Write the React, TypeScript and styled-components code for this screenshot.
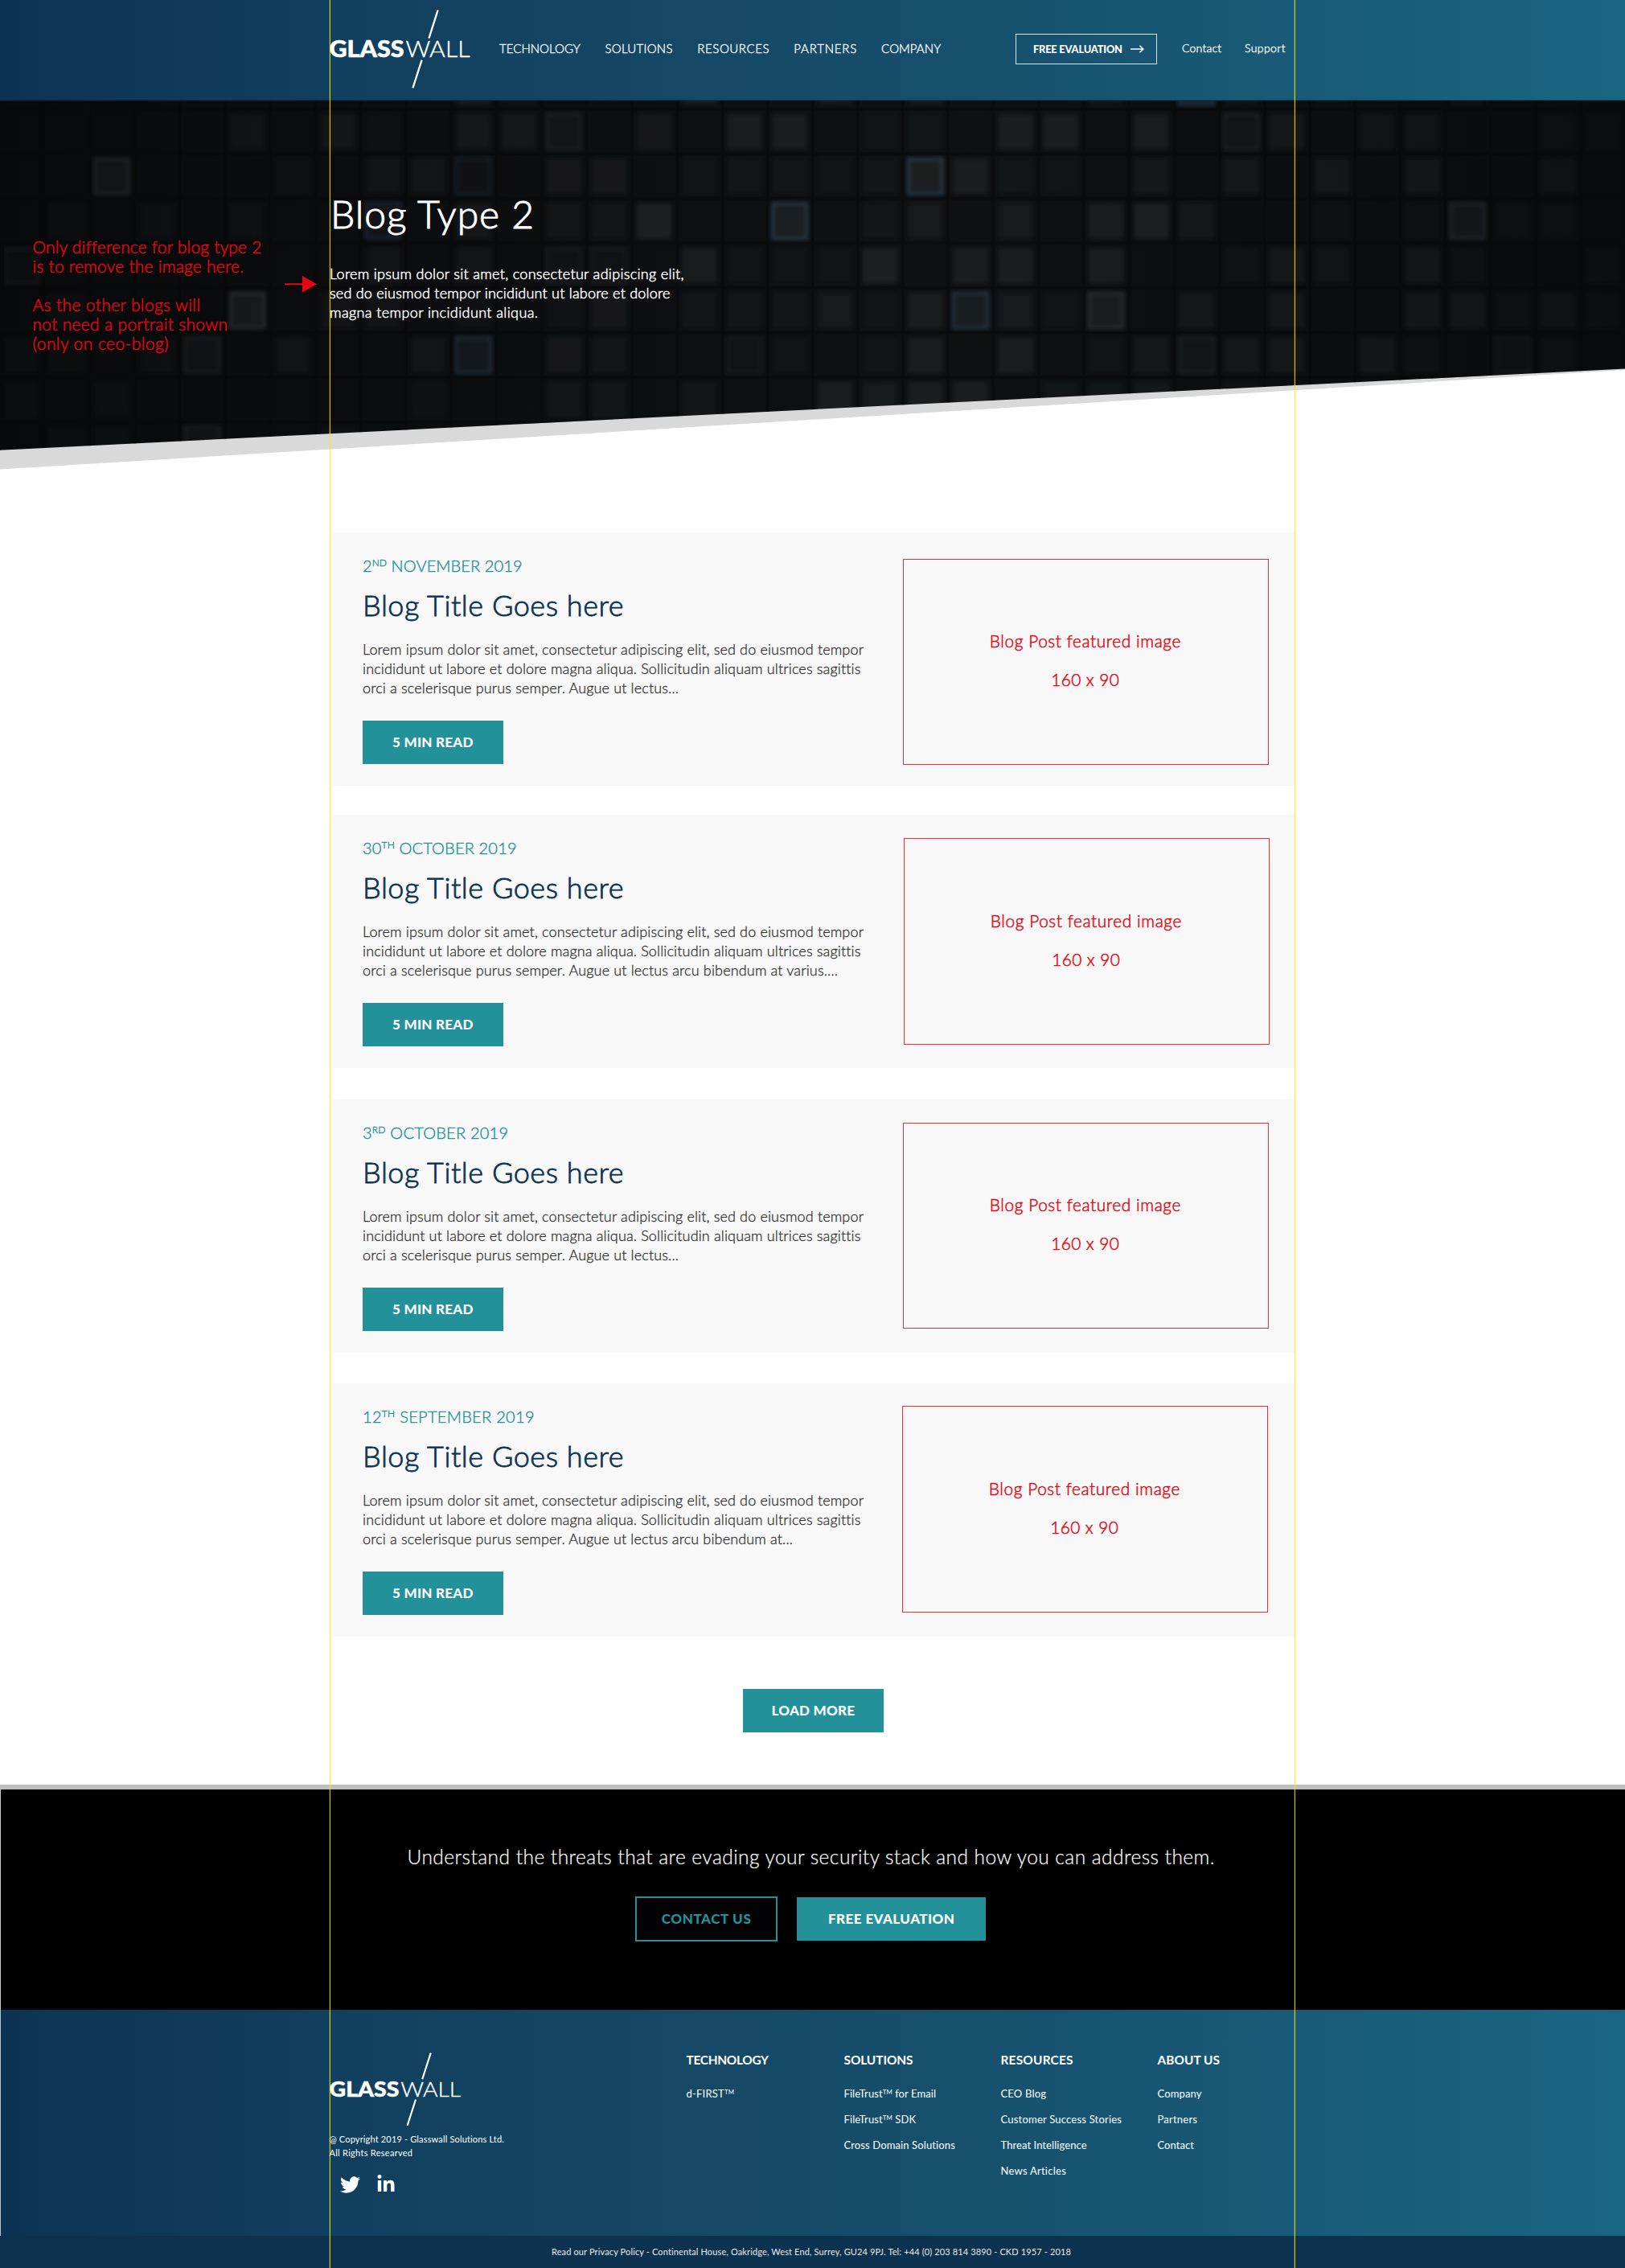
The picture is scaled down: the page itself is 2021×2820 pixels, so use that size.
import React, { useLayoutEffect, useRef, useState } from 'react';
import styled, { createGlobalStyle, css } from 'styled-components';
import { FaLinkedinIn, FaTwitter } from 'react-icons/fa';

const color = {
  teal: '#23919a',
  navy: '#0b3354',
  red: '#e30613',
  panel: '#f8f8f8',
  ink: '#2e2e2d',
};

const brandGradient =
  'linear-gradient(90deg, #0c3353 0%, #113f5f 21%, #154864 42%, #16506d 60%, #185a77 79%, #196682 100%)';

const GlobalStyle = createGlobalStyle`
  *, *::before, *::after { box-sizing: border-box; }
  body {
    margin: 0;
    background: #fff;
    font-family: Lato, 'Open Sans', sans-serif;
    -webkit-font-smoothing: antialiased;
  }
  h1, h2, h3, p, ul { margin: 0; padding: 0; font-weight: inherit; list-style: none; }
  a { color: inherit; text-decoration: none; }
  sup { font-size: 60%; line-height: 0; vertical-align: 0.56em; }
`;

/* A weight between Lato Light and Lato Regular, set by the stroke in px. */
const bookWeight = (stroke: number) => css`
  font-weight: 300;
  -webkit-text-stroke: ${stroke}px currentColor;
`;

/* ---------- text tracked out to a set measure ---------- */

const TrackedText = styled.span`
  display: inline-block;
  white-space: nowrap;
`;

function Tracked({ width, children }: { width: number; children: React.ReactNode }) {
  const ref = useRef<HTMLSpanElement>(null);
  const [spacing, setSpacing] = useState(0);
  useLayoutEffect(() => {
    const el = ref.current;
    if (!el) return;
    el.style.letterSpacing = '0px';
    const natural = el.getBoundingClientRect().width;
    const gaps = Math.max(1, (el.textContent || '').length - 1);
    const next = (width - natural) / gaps;
    el.style.letterSpacing = `${next}px`;
    setSpacing(next);
  }, [width]);
  return (
    <TrackedText ref={ref} style={{ letterSpacing: spacing, marginRight: -spacing }}>
      {children}
    </TrackedText>
  );
}

type Line = [text: string, width: number];

function Lines({ lines }: { lines: Line[] }) {
  return (
    <>
      {lines.map(([text, width], i) => (
        <React.Fragment key={i}>
          {i > 0 && <br />}
          {text && <Tracked width={width}>{text}</Tracked>}
        </React.Fragment>
      ))}
    </>
  );
}

/* ---------- page frame ---------- */

const Page = styled.div`
  position: relative;
  width: 2021px;
  height: 2820px;
  overflow: hidden;
`;

const Guide = styled.div<{ $x: number }>`
  position: absolute;
  top: 0;
  bottom: 0;
  left: ${(p) => p.$x}px;
  width: 1px;
  background: rgba(255, 237, 0, 0.78);
  box-shadow: -1px 0 0 rgba(255, 237, 0, 0.2);
  z-index: 5;
`;

/* ---------- logo ---------- */

const LogoSvg = styled.svg<{ $width: number }>`
  display: block;
  flex: none;
  width: ${(p) => p.$width}px;
  height: auto;
`;

function Logo({ width }: { width: number }) {
  return (
    <LogoSvg $width={width} viewBox="0 0 176 98" fill="#fff">
      <text
        x="-0.5"
        y="59"
        fontSize="28"
        fontWeight="900"
        stroke="#fff"
        strokeWidth="0.5"
        textLength="93"
        lengthAdjust="spacingAndGlyphs"
      >
        GLASS
      </text>
      <text
        x="94.5"
        y="59"
        fontSize="28"
        fontWeight="300"
        stroke="#fff"
        strokeWidth="0.4"
        textLength="80"
        lengthAdjust="spacingAndGlyphs"
      >
        WALL
      </text>
      <path d="M134.6 0.6L123.4 35.6M114.6 62.6L103.4 97.4" stroke="#fff" strokeWidth="2.3" />
    </LogoSvg>
  );
}

/* ---------- header ---------- */

const Header = styled.header`
  display: flex;
  height: 125px;
  padding-left: 410px;
  color: #fff;
  background: ${brandGradient};
  border-bottom: 1px solid rgba(8, 40, 62, 0.5);
`;

const HeaderLogo = styled.a`
  width: 211px;
  padding-top: 12px;
`;

const Nav = styled.nav`
  display: flex;
  gap: 30.8px;
  width: 641.5px;
  padding-top: 50px;
  font-size: 15px;
  line-height: 20px;
  ${bookWeight(0.35)}
`;

const HeaderButton = styled.a`
  display: flex;
  align-items: center;
  gap: 10px;
  width: 176px;
  height: 38px;
  margin-top: 42px;
  padding-left: 21.5px;
  border: 1.5px solid rgba(255, 255, 255, 0.85);
  font-size: 12.8px;
  font-weight: 900;
`;

const UtilityNav = styled.nav`
  display: flex;
  gap: 29px;
  padding: 50px 0 0 31.5px;
  font-size: 14px;
  line-height: 20px;
  ${bookWeight(0.35)}
`;

const NAV: Line[] = [
  ['TECHNOLOGY', 100.7],
  ['SOLUTIONS', 84],
  ['RESOURCES', 89.2],
  ['PARTNERS', 78],
  ['COMPANY', 74],
];

function SiteHeader() {
  return (
    <Header>
      <HeaderLogo href="#">
        <Logo width={176} />
      </HeaderLogo>
      <Nav>
        {NAV.map(([label, width]) => (
          <a href="#" key={label}>
            <Tracked width={width}>{label}</Tracked>
          </a>
        ))}
      </Nav>
      <HeaderButton href="#">
        <Tracked width={111}>FREE EVALUATION</Tracked>
        <svg width="17" height="10" viewBox="0 0 17 10" fill="none" stroke="#fff" strokeWidth="1.5">
          <path d="M0 5H15.5M11.5 0.7L15.8 5L11.5 9.3" />
        </svg>
      </HeaderButton>
      <UtilityNav>
        <a href="#"><Tracked width={49}>Contact</Tracked></a>
        <a href="#"><Tracked width={50.5}>Support</Tracked></a>
      </UtilityNav>
    </Header>
  );
}

/* ---------- hero ---------- */

const HeroSection = styled.section`
  position: relative;
  display: grid;
  grid-template-columns: 410px 1fr;
  height: 459px;
  margin-bottom: -1px;
`;

const HeroArt = styled.svg`
  position: absolute;
  inset: 0;
  width: 100%;
  height: 100%;
`;

const Annotation = styled.aside`
  position: relative;
  display: flex;
  align-items: flex-start;
  gap: 30px;
  padding: 169.5px 0 0 40.5px;
  color: ${color.red};
  font-size: 20.8px;
  line-height: 24.15px;
  ${bookWeight(0.5)}

  p { width: 283.5px; }
  svg { flex: none; margin-top: 48px; }
`;

const HeroCopy = styled.div`
  position: relative;
  color: #fff;

  h1 { padding: 111px 0 31.5px 1px; font-size: 48px; line-height: 60px; ${bookWeight(1)} }
  p { font-size: 18px; line-height: 24.2px; ${bookWeight(0.5)} }
`;

const TILE_X = 5.3;
const TILE_Y = -39;
const TILE_PITCH_X = 56.2;
const TILE_PITCH_Y = 55.6;

/* Lit tiles, one line per row: column, brightness, and an edge (g grey, b blue). */
const TILES = [
  '10:4 11:1 15:4 18:3 20:3 24:2 26:5b 27:2 29:1 32:2',
  '5:2 7:3 8:1 10:3 11:3 12:2g 14:3 16:4 17:4 19:1 20:2 22:4 23:4 25:4 27:2g 28:3 30:2 31:2 34:1 35:1',
  '2:3g 6:1 8:2 9:2 10:2b 12:3 13:3 15:1 16:2 17:2 18:1 19:2 20:6b 21:4 22:2 23:1 25:3 27:3 29:3 31:3 34:2',
  '1:1 3:1 5:1 8:3b 10:3 12:2 13:2 14:5 17:6b 19:2 20:3 22:3 24:4 25:5 26:3 29:1 31:1 32:3g 33:1 34:1',
  '0:1g 8:2 10:2 12:1g 13:1g 15:4 16:1 17:1 18:1 19:5 21:4 22:4 24:4 27:1 28:3 29:2 31:3 32:1 35:1',
  '1:1 5:4g 7:2 8:2 10:1 12:1 13:3 15:2 16:2 17:2 18:3 19:1 20:4 21:5b 22:3 23:1 24:4g 26:3 28:3 31:3 32:3 33:1 34:2 35:1',
  '0:1 1:1 3:1 4:2g 6:2 9:2 10:4b 12:3 13:2 16:1g 17:1 19:1 20:4 22:4 24:1 25:3 26:2g 27:3 28:3 30:3 31:1 33:1g 34:1',
  '0:1 2:1 9:1 12:2 13:2 15:2 18:4 19:3 20:4 21:4 23:2 24:2 25:3 27:1',
  '1:1 2:1 4:2g 7:1',
].map((row) =>
  row.split(' ').map((cell) => {
    const [col, spec] = cell.split(':');
    return { col: Number(col), level: parseInt(spec, 10), edge: spec.slice(1) };
  }),
);

function Tiles() {
  return (
    <g>
      {TILES.map((row, r) =>
        row.map(({ col, level, edge }) => {
          const blue = edge === 'b';
          return (
            <rect
              key={`${r}-${col}`}
              x={TILE_X + col * TILE_PITCH_X}
              y={TILE_Y + r * TILE_PITCH_Y}
              width={43}
              height={44}
              fill={blue ? '#9fc0d6' : '#e8eef4'}
              fillOpacity={level * 0.0145}
              stroke={edge ? (blue ? '#345f80' : '#48525a') : 'none'}
              strokeOpacity={0.08 + level * 0.085}
              strokeWidth={2.5}
            />
          );
        }),
      )}
    </g>
  );
}

function Hero() {
  return (
    <HeroSection>
      <HeroArt viewBox="0 0 2021 459" preserveAspectRatio="none">
        <defs>
          <linearGradient id="night">
            <stop offset="0" stopColor="#08090a" />
            <stop offset="0.35" stopColor="#0d0e10" />
            <stop offset="0.6" stopColor="#0e1011" />
            <stop offset="1" stopColor="#090a0b" />
          </linearGradient>
          <pattern
            id="seams"
            x={TILE_X - 8}
            y={TILE_Y - 8}
            width={TILE_PITCH_X}
            height={TILE_PITCH_Y}
            patternUnits="userSpaceOnUse"
          >
            <path d="M0 2H56.2M2 0V55.6" stroke="#050607" strokeWidth="4" strokeOpacity="0.35" />
          </pattern>
          <clipPath id="slope">
            <polygon points="0,0 2021,0 2021,333.5 0,434.7" />
          </clipPath>
          <filter id="soft" x="0" y="0" width="1" height="1">
            <feGaussianBlur stdDeviation="2.4" />
          </filter>
        </defs>
        <polygon points="0,400 2021,300 2021,335 0,458.6" fill="#d9d9d9" />
        <g clipPath="url(#slope)">
          <rect width="2021" height="459" fill="url(#night)" />
          <rect width="2021" height="459" fill="url(#seams)" />
          <g filter="url(#soft)">
            <Tiles />
          </g>
        </g>
      </HeroArt>
      <Annotation>
        <p>
          <Lines
            lines={[
              ['Only difference for blog type 2', 284],
              ['is to remove the image here.', 262.5],
              ['', 0],
              ['As the other blogs will', 208.5],
              ['not need a portrait shown', 242.5],
              ['(only on ceo-blog)', 169],
            ]}
          />
        </p>
        <svg width="40" height="21" viewBox="0 0 40 21" fill={color.red}>
          <path d="M0 9.3H22V0L40 10.3L22 20.6V11.3H0Z" />
        </svg>
      </Annotation>
      <HeroCopy>
        <h1><Tracked width={253}>Blog Type 2</Tracked></h1>
        <p>
          <Lines
            lines={[
              ['Lorem ipsum dolor sit amet, consectetur adipiscing elit,', 440.5],
              ['sed do eiusmod tempor incididunt ut labore et dolore', 423.5],
              ['magna tempor incididunt aliqua.', 259],
            ]}
          />
        </p>
      </HeroCopy>
    </HeroSection>
  );
}

/* ---------- blog list ---------- */

const Button = styled.a<{ $w: number; $outline?: boolean }>`
  display: flex;
  align-items: center;
  justify-content: center;
  width: ${(p) => p.$w}px;
  height: ${(p) => (p.$outline ? 56 : 54)}px;
  padding-bottom: 1px;
  border: ${(p) => (p.$outline ? `2px solid ${color.teal}` : 'none')};
  background: ${(p) => (p.$outline ? '#030306' : color.teal)};
  color: ${(p) => (p.$outline ? color.teal : '#fff')};
  font-size: 17px;
  font-weight: 900;
`;

const Main = styled.main`
  display: flex;
  flex-direction: column;
  align-items: flex-start;
  height: 1636px;
  padding: 79px 0 0 410px;
`;

const Card = styled.article<{ $gap: number }>`
  display: flex;
  align-items: flex-start;
  width: 1200px;
  height: 315px;
  margin-bottom: ${(p) => p.$gap}px;
  padding-left: 41px;
  background: ${color.panel};
`;

const CardBody = styled.div`
  width: 660px;
  padding-top: 29px;
`;

const CardDate = styled.p`
  height: 24px;
  color: ${color.teal};
  font-size: 20px;
  line-height: 24px;
  ${bookWeight(0.4)}
`;

const CardTitle = styled.h2`
  height: 44px;
  margin-top: 15px;
  color: ${color.navy};
  font-size: 36px;
  line-height: 44px;
  ${bookWeight(0.8)}
`;

const CardText = styled.p`
  margin: 21px 0 29px;
  color: ${color.ink};
  font-size: 18px;
  line-height: 24px;
  ${bookWeight(0.3)}
`;

const FeaturedImage = styled.div<{ $top: number; $left: number }>`
  width: 455px;
  height: 256.5px;
  margin: ${(p) => p.$top}px 0 0 ${(p) => p.$left}px;
  padding: 89.5px 2px 0 0;
  border: 1.4px solid #e8303b;
  color: ${color.red};
  font-size: 20.8px;
  line-height: 24px;
  text-align: center;
  ${bookWeight(0.5)}
`;

type Post = {
  day: string;
  suffix: string;
  month: string;
  dateWidth: number;
  lastLine: Line;
  gap: number;
  image: [top: number, left: number];
};

const POSTS: Post[] = [
  { day: '2', suffix: 'ND', month: ' NOVEMBER 2019', dateWidth: 198.5, lastLine: ['orci a scelerisque purus semper. Augue ut lectus...', 393], gap: 36, image: [32.6, 12] },
  { day: '30', suffix: 'TH', month: ' OCTOBER 2019', dateWidth: 191.5, lastLine: ['orci a scelerisque purus semper. Augue ut lectus arcu bibendum at varius....', 591], gap: 39, image: [29, 13] },
  { day: '3', suffix: 'RD', month: ' OCTOBER 2019', dateWidth: 181, lastLine: ['orci a scelerisque purus semper. Augue ut lectus...', 393], gap: 38, image: [28.6, 12] },
  { day: '12', suffix: 'TH', month: ' SEPTEMBER 2019', dateWidth: 213.5, lastLine: ['orci a scelerisque purus semper. Augue ut lectus arcu bibendum at...', 535], gap: 65, image: [28, 11] },
];

function BlogCard({ post }: { post: Post }) {
  return (
    <Card $gap={post.gap}>
      <CardBody>
        <CardDate>
          <Tracked width={post.dateWidth}>
            {post.day}
            <sup>{post.suffix}</sup>
            {post.month}
          </Tracked>
        </CardDate>
        <CardTitle><Tracked width={324.5}>Blog Title Goes here</Tracked></CardTitle>
        <CardText>
          <Lines
            lines={[
              ['Lorem ipsum dolor sit amet, consectetur adipiscing elit, sed do eiusmod tempor', 623],
              ['incididunt ut labore et dolore magna aliqua. Sollicitudin aliquam ultrices sagittis', 619],
              post.lastLine,
            ]}
          />
        </CardText>
        <Button href="#" $w={174.5}><Tracked width={100.5}>5 MIN READ</Tracked></Button>
      </CardBody>
      <FeaturedImage $top={post.image[0]} $left={post.image[1]}>
        <Lines lines={[['Blog Post featured image', 237.5], ['', 0], ['160 x 90', 84.5]]} />
      </FeaturedImage>
    </Card>
  );
}

const LoadMoreRow = styled.div`
  display: flex;
  padding-left: 514px;
`;

/* ---------- call to action ---------- */

const CtaSection = styled.section`
  display: flex;
  flex-direction: column;
  align-items: center;
  height: 280px;
  padding: 69px 4px 0 0;
  border-top: 6px solid #bfbfbf;
  background: linear-gradient(90deg, #c8c8c8 1px, #000 1px);
  color: #fff;
  font-size: 24.5px;
  line-height: 30px;
  ${bookWeight(0.2)}
`;

const CtaButtons = styled.div`
  display: flex;
  align-items: center;
  gap: 24.5px;
  margin: 34px 1px 0 0;
  -webkit-text-stroke: 0;
`;

/* ---------- footer ---------- */

const FooterSection = styled.footer`
  display: grid;
  grid-template-columns: 444px 196px 195px 195px 1fr;
  height: 281px;
  padding: 52px 0 0 409.5px;
  background: linear-gradient(90deg, #b9c4cc 1px, transparent 1px), ${brandGradient};
  color: #fff;
`;

const FooterLogo = styled.div`
  padding-top: 1px;
`;

const Copyright = styled.p`
  margin-top: 7px;
  font-size: 11px;
  line-height: 17.8px;
`;

const Social = styled.div`
  display: flex;
  gap: 20px;
  margin: 17.5px 0 0 13px;
`;

const FooterColumn = styled.div`
  h3 { font-size: 15.4px; font-weight: 700; line-height: 20px; }
  ul { margin-top: 15.5px; font-size: 13px; line-height: 32px; }
  li { height: 32px; }
`;

const LegalBar = styled.div`
  height: 40px;
  padding: 10.5px 0 0 686px;
  background: #0c324f;
  color: #e6ebef;
  font-size: 11px;
  line-height: 18px;
`;

const TM = <sup>TM</sup>;

const COLUMNS: { title: Line; links: { label: React.ReactNode; width: number }[] }[] = [
  { title: ['TECHNOLOGY', 102.5], links: [{ label: <>d-FIRST{TM}</>, width: 59.5 }] },
  {
    title: ['SOLUTIONS', 86],
    links: [
      { label: <>FileTrust{TM} for Email</>, width: 114.5 },
      { label: <>FileTrust{TM} SDK</>, width: 89.5 },
      { label: 'Cross Domain Solutions', width: 138.5 },
    ],
  },
  {
    title: ['RESOURCES', 90],
    links: [
      { label: 'CEO Blog', width: 56.5 },
      { label: 'Customer Success Stories', width: 150.5 },
      { label: 'Threat Intelligence', width: 107 },
      { label: 'News Articles', width: 81.5 },
    ],
  },
  {
    title: ['ABOUT US', 77.5],
    links: [
      { label: 'Company', width: 55 },
      { label: 'Partners', width: 49.5 },
      { label: 'Contact', width: 45.5 },
    ],
  },
];

function SiteFooter() {
  return (
    <>
      <FooterSection>
        <div>
          <FooterLogo>
            <Logo width={164.4} />
          </FooterLogo>
          <Copyright>
            <Lines lines={[['@ Copyright 2019 - Glasswall Solutions Ltd.', 217.5], ['All Rights Researved', 103.5]]} />
          </Copyright>
          <Social>
            <FaTwitter size={25} />
            <FaLinkedinIn size={24} />
          </Social>
        </div>
        {COLUMNS.map((col) => (
          <FooterColumn key={col.title[0]}>
            <h3><Tracked width={col.title[1]}>{col.title[0]}</Tracked></h3>
            <ul>
              {col.links.map((link, i) => (
                <li key={i}>
                  <a href="#"><Tracked width={link.width}>{link.label}</Tracked></a>
                </li>
              ))}
            </ul>
          </FooterColumn>
        ))}
      </FooterSection>
      <LegalBar>
        <Tracked width={646}>
          Read our Privacy Policy - Continental House, Oakridge, West End, Surrey, GU24 9PJ. Tel: +44 (0) 203 814 3890 - CKD 1957 - 2018
        </Tracked>
      </LegalBar>
    </>
  );
}

export default function App() {
  return (
    <Page>
      <GlobalStyle />
      <SiteHeader />
      <Hero />
      <Main>
        {POSTS.map((post) => (
          <BlogCard key={post.day} post={post} />
        ))}
        <LoadMoreRow>
          <Button href="#" $w={174.5}><Tracked width={103.5}>LOAD MORE</Tracked></Button>
        </LoadMoreRow>
      </Main>
      <CtaSection>
        <p>
          <Tracked width={1004}>
            Understand the threats that are evading your security stack and how you can address them.
          </Tracked>
        </p>
        <CtaButtons>
          <Button href="#" $w={176.5} $outline><Tracked width={111}>CONTACT US</Tracked></Button>
          <Button href="#" $w={235}><Tracked width={157}>FREE EVALUATION</Tracked></Button>
        </CtaButtons>
      </CtaSection>
      <SiteFooter />
      <Guide $x={410} />
      <Guide $x={1610} />
    </Page>
  );
}
